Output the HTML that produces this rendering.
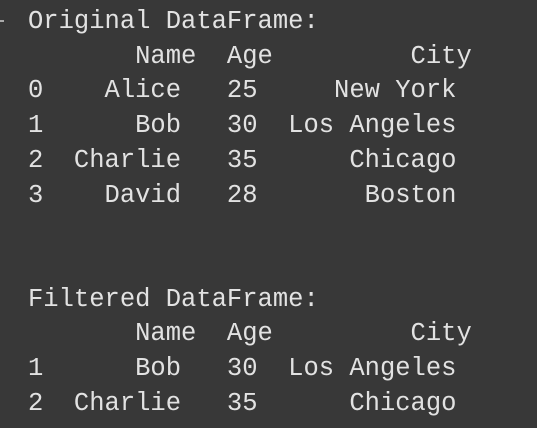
<!DOCTYPE html>
<html><head><style>
html,body{margin:0;padding:0;width:537px;height:428px;background:#383838;overflow:hidden}
pre{position:absolute;left:28px;top:5px;margin:0;font-family:"Liberation Mono",monospace;font-size:25.5px;line-height:34.7px;color:#e2e2e2;letter-spacing:0}
.m{position:absolute;left:0;top:20px;width:4px;height:2px;background:#aaa}
</style></head><body>
<div class="m"></div>
<pre>Original DataFrame:
       Name  Age         City
0    Alice   25     New York
1      Bob   30  Los Angeles
2  Charlie   35      Chicago
3    David   28       Boston


Filtered DataFrame:
       Name  Age         City
1      Bob   30  Los Angeles
2  Charlie   35      Chicago</pre>
</body></html>
